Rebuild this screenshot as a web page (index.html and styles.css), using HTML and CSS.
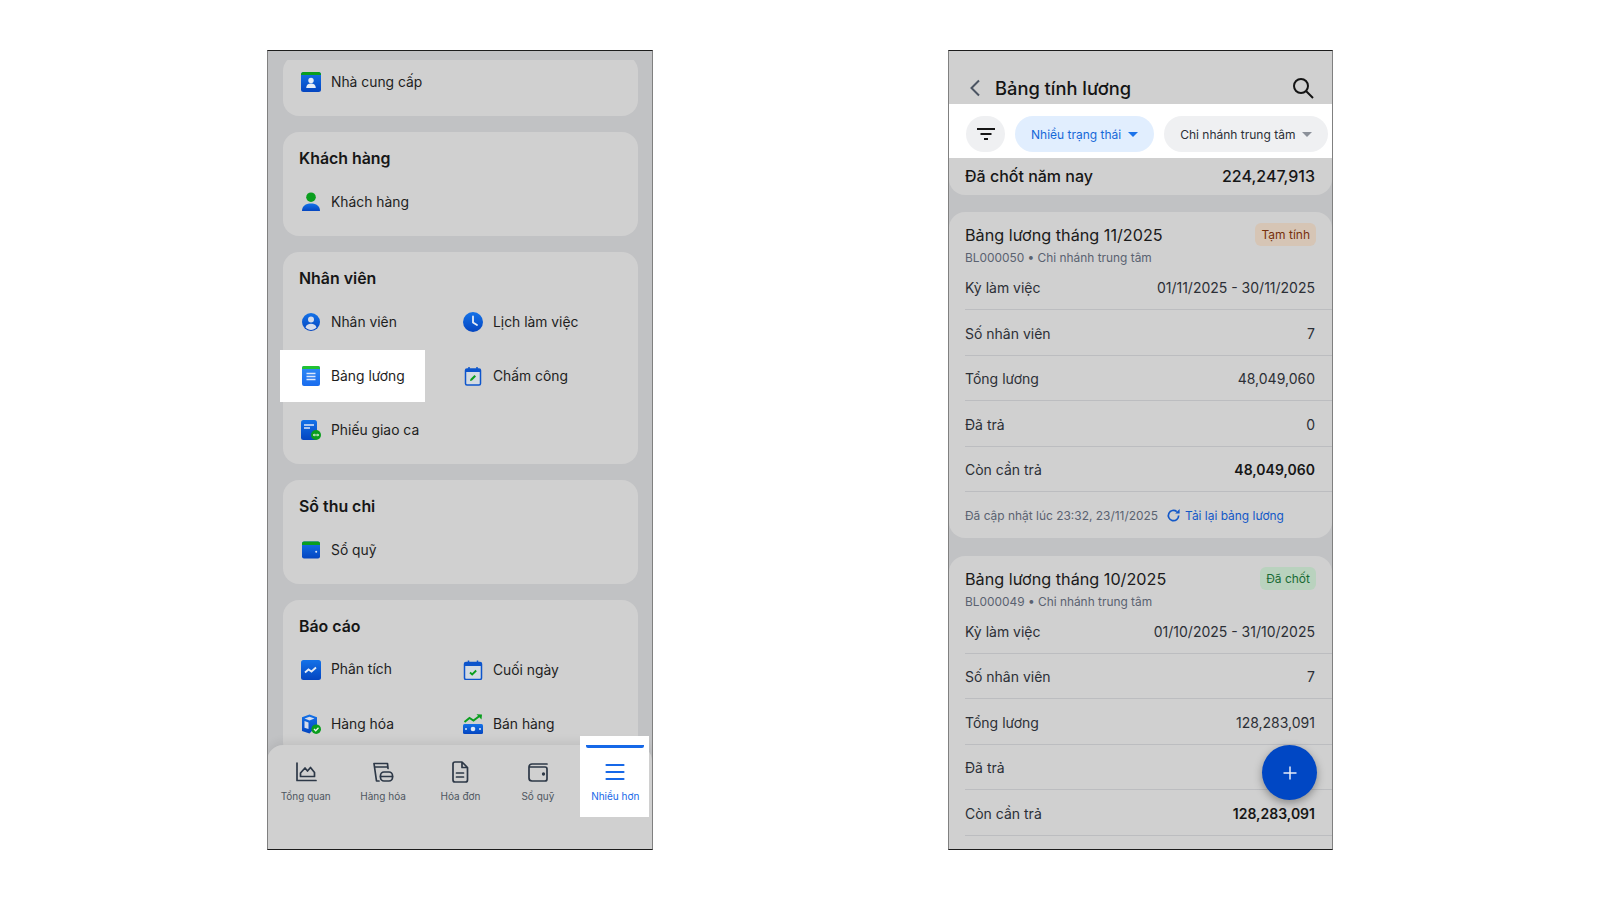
FILE: index.html
```html
<!DOCTYPE html>
<html lang="vi">
<head>
<meta charset="utf-8">
<title>Bảng tính lương</title>
<link rel="stylesheet" href="styles.css">
</head>
<body>
<div class="stage">
  <section class="phone">
    <div class="status-gap"></div>
    <div class="scroll">
      <div class="group first">
        <div class="grid">
          <div class="item">
            <svg class="ic" viewBox="0 0 20 20">
              <defs>
                <linearGradient id="blue" x1="0" y1="0" x2="0" y2="1"><stop offset="0" stop-color="#1472e8"/><stop offset="1" stop-color="#0445c0"/></linearGradient>
                <linearGradient id="lblue" x1="0" y1="0" x2="0" y2="1"><stop offset="0" stop-color="#2f8bf5"/><stop offset="1" stop-color="#1a6cee"/></linearGradient>
              </defs>
              <rect width="20" height="20" rx="2.5" fill="url(#blue)"/>
              <path d="M2.5 0h15A2.5 2.5 0 0 1 20 2.5V3H0v-.5A2.5 2.5 0 0 1 2.5 0z" fill="#0a9e1e"/>
              <circle cx="10" cy="8.5" r="2.7" fill="#e6edf7"/>
              <path d="M5.2 16c0-3 2-4.4 4.8-4.4s4.800 1.400 4.800 4.400z" fill="#e6edf7"/>
            </svg>
            <span>Nhà cung cấp</span>
          </div>
        </div>
      </div>
      <div class="group">
        <h2>Khách hàng</h2>
        <div class="grid">
          <div class="item">
            <svg class="ic" viewBox="0 0 20 20"><circle cx="10" cy="5.200" r="4.800" fill="#0a9e1e"/><path d="M1 19c0-5 3.500-7.500 9-7.500s9 2.500 9 7.500z" fill="url(#blue)"/></svg>
            <span>Khách hàng</span>
          </div>
        </div>
      </div>
      <div class="group">
        <h2>Nhân viên</h2>
        <div class="grid">
          <div class="item">
            <svg class="ic" viewBox="0 0 20 20"><circle cx="10" cy="10" r="9" fill="url(#blue)"/><circle cx="10" cy="7.600" r="3" fill="#d5dceb"/><path d="M4.500 15.500c.6-2.600 2.700-3.700 5.500-3.700s4.900 1.100 5.500 3.700C14 17.100 12 18 10 18s-4-.9-5.500-2.500z" fill="#d5dceb"/></svg>
            <span>Nhân viên</span>
          </div>
          <div class="item">
            <svg class="ic" viewBox="0 0 20 20"><circle cx="10" cy="10" r="10" fill="url(#blue)"/><path d="M10 4.500V10.500L14 13" fill="none" stroke="#e6edf7" stroke-width="1.800" stroke-linecap="round"/></svg>
            <span>Lịch làm việc</span>
          </div>
          <div class="item active">
            <svg class="ic" viewBox="0 0 20 20"><rect x="1" width="18" height="20" rx="2" fill="url(#lblue)"/><path d="M3 0h14a2 2 0 0 1 2 2v1H1V2a2 2 0 0 1 2-2z" fill="#22c232"/><path d="M5.500 7.500h9M5.500 10.500h9M5.500 13.500h9" stroke="#dbe8fb" stroke-width="1.300"/></svg>
            <span>Bảng lương</span>
          </div>
          <div class="item">
            <svg class="ic" viewBox="0 0 20 20"><rect x="2.500" y="3" width="15" height="16" rx="1.500" fill="#d4dbe2" stroke="#0d55cc" stroke-width="1.500"/><path d="M2.500 4.500a1.500 1.500 0 0 1 1.500-1.500h12a1.500 1.500 0 0 1 1.500 1.500V6h-15z" fill="#0d55cc"/><path d="M6 1v3M14 1v3" stroke="#0d55cc" stroke-width="1.500"/><path d="M7 15l.5-2 4-4 1.500 1.500-4 4z" fill="#0a9e1e"/></svg>
            <span>Chấm công</span>
          </div>
          <div class="item">
            <svg class="ic" viewBox="0 0 20 20"><rect width="16" height="20" rx="2.500" fill="url(#blue)"/><path d="M3 5h10M3 8h6" stroke="#dfe8f7" stroke-width="1.400"/><circle cx="15" cy="15" r="5" fill="#0a9e1e"/><path d="M12.500 15h5M13.500 13.800l-1 1.200 1 1.200M16.500 13.800l1 1.200-1 1.200" fill="none" stroke="#e9f5ea" stroke-width="1"/></svg>
            <span>Phiếu giao ca</span>
          </div>
        </div>
      </div>
      <div class="group">
        <h2>Sổ thu chi</h2>
        <div class="grid">
          <div class="item">
            <svg class="ic" viewBox="0 0 20 20"><rect x="1" y="1.500" width="18" height="17" rx="2" fill="url(#blue)"/><path d="M3 1.500h14a2 2 0 0 1 2 2V5H1V3.500a2 2 0 0 1 2-2z" fill="#0a9e1e"/><circle cx="15.200" cy="11.800" r="1" fill="#dfe8f7"/></svg>
            <span>Sổ quỹ</span>
          </div>
        </div>
      </div>
      <div class="group">
        <h2>Báo cáo</h2>
        <div class="grid">
          <div class="item up">
            <svg class="ic" viewBox="0 0 20 20"><rect width="20" height="20" rx="2.500" fill="url(#blue)"/><path d="M4 12.500l3.500-3 3 2 4.500-4" fill="none" stroke="#e6edf7" stroke-width="1.800"/></svg>
            <span>Phân tích</span>
          </div>
          <div class="item">
            <svg class="ic" viewBox="0 0 20 20"><rect x="1.500" y="2.500" width="17" height="17" rx="1.500" fill="#d4dbe2" stroke="#0d55cc" stroke-width="1.500"/><path d="M1.500 4a1.500 1.500 0 0 1 1.500-1.500h14A1.500 1.500 0 0 1 18.500 4v2h-17z" fill="#0d55cc"/><path d="M5.500 .500v3M14.500 .500v3" stroke="#0d55cc" stroke-width="1.500"/><path d="M7 12.500l2.200 2 4-4" fill="none" stroke="#0a9e1e" stroke-width="1.800"/></svg>
            <span>Cuối ngày</span>
          </div>
          <div class="item">
            <svg class="ic" viewBox="0 0 20 20"><path d="M8.500 .5l7.500 2.800v8.200l-7.500 8-7.500-2.500V3.300z" fill="url(#blue)"/><path d="M3.500 4.500L8.500 2.800l5 1.700-5 2z M3.500 7l4 1.500V15l-4-1.300z" fill="#d5dceb"/><circle cx="15.200" cy="15.200" r="4.800" fill="#0a9e1e"/><path d="M13 15l1.700 1.700 2.800-3" fill="none" stroke="#e9f5ea" stroke-width="1.300"/></svg>
            <span>Hàng hóa</span>
          </div>
          <div class="item">
            <svg class="ic" viewBox="0 0 20 20"><path d="M1.500 8l5-4 4 2.500 6-4.500" fill="none" stroke="#0a9e1e" stroke-width="2"/><path d="M13.500 .3L19 .5l-.5 5z" fill="#0a9e1e"/><rect y="10" width="20" height="10" rx="1.500" fill="url(#blue)"/><circle cx="10" cy="15" r="2.300" fill="#dfe8f7"/><circle cx="3" cy="15" r="1" fill="#dfe8f7"/><circle cx="17" cy="15" r="1" fill="#dfe8f7"/></svg>
            <span>Bán hàng</span>
          </div>
        </div>
      </div>
    </div>
    <nav class="tabbar">
      <div class="tab">
        <svg class="nav-ic" viewBox="0 0 24 24"><path d="M3 3v17.500h19M6.500 16.500v-3.500L11 8l2.500 3 3-3.500 4 5v4z"/></svg>
        <span>Tổng quan</span>
      </div>
      <div class="tab">
        <svg class="nav-ic" viewBox="0 0 24 24"><path d="M8 21H5.500L3 3.500h13.500l.5 5M3.500 7h13"/><rect x="9.500" y="12" width="12" height="9" rx="3.500"/><path d="M9.500 16.500h12"/></svg>
        <span>Hàng hóa</span>
      </div>
      <div class="tab">
        <svg class="nav-ic" viewBox="0 0 24 24"><path d="M5 4a2 2 0 0 1 2-2h7l5.500 5.500V20a2 2 0 0 1-2 2H7a2 2 0 0 1-2-2zM14 2v5.500h5.500M8.500 13h7M8.500 17h7"/></svg>
        <span>Hóa đơn</span>
      </div>
      <div class="tab">
        <svg class="nav-ic" viewBox="0 0 24 24"><path d="M3 7a3 3 0 0 1 3-3h15M3 7v11a3 3 0 0 0 3 3h13a2 2 0 0 0 2-2V9a2 2 0 0 0-2-2H3"/><circle cx="17.500" cy="14" r=".8"/></svg>
        <span>Sổ quỹ</span>
      </div>
      <div class="tab current">
        <svg class="nav-ic" viewBox="0 0 24 24"><path d="M3.500 5h17M3.500 12h17M3.500 19h17"/></svg>
        <span>Nhiều hơn</span>
      </div>
    </nav>
  </section>

  <section class="phone phone-b">
    <header class="topbar">
      <svg class="back" viewBox="0 0 14 20"><path d="M11 2.500L3.500 10l7.500 7.500"/></svg>
      <h1>Bảng tính lương</h1>
      <svg class="search" viewBox="0 0 24 24"><circle cx="10" cy="10" r="7"/><path d="M15 15l7 7"/></svg>
    </header>
    <div class="filters">
      <div class="filter-btn">
        <svg class="filter-ic" viewBox="0 0 20 14"><path d="M1 2h18M4.500 7h11M8 12h4"/></svg>
      </div>
      <div class="pill on"><span>Nhiều trạng thái</span><i class="caret"></i></div>
      <div class="pill"><span>Chi nhánh trung tâm</span><i class="caret"></i></div>
    </div>
    <div class="summary"><span>Đã chốt năm nay</span><span>224,247,913</span></div>

    <article class="card">
      <div class="card-head">
        <div><h3>Bảng lương tháng 11/2025</h3><p>BL000050 • Chi nhánh trung tâm</p></div>
        <span class="badge temp">Tạm tính</span>
      </div>
      <div class="row"><span>Kỳ làm việc</span><span>01/11/2025 - 30/11/2025</span></div>
      <div class="row"><span>Số nhân viên</span><span>7</span></div>
      <div class="row"><span>Tổng lương</span><span>48,049,060</span></div>
      <div class="row"><span>Đã trả</span><span>0</span></div>
      <div class="row"><span>Còn cần trả</span><b>48,049,060</b></div>
      <div class="foot">
        <span>Đã cập nhật lúc 23:32, 23/11/2025</span>
        <svg class="reload" viewBox="0 0 16 16"><path d="M13.500 8A5.500 5.500 0 1 1 11.500 3.800"/><path class="solid" d="M9.800 5.800h4.700V1z"/></svg>
        <a>Tải lại bảng lương</a>
      </div>
    </article>

    <article class="card">
      <div class="card-head">
        <div><h3>Bảng lương tháng 10/2025</h3><p>BL000049 • Chi nhánh trung tâm</p></div>
        <span class="badge done">Đã chốt</span>
      </div>
      <div class="row"><span>Kỳ làm việc</span><span>01/10/2025 - 31/10/2025</span></div>
      <div class="row"><span>Số nhân viên</span><span>7</span></div>
      <div class="row"><span>Tổng lương</span><span>128,283,091</span></div>
      <div class="row"><span>Đã trả</span><span>0</span></div>
      <div class="row"><span>Còn cần trả</span><b>128,283,091</b></div>
      <div class="foot"></div>
    </article>

    <div class="fab"><svg viewBox="0 0 16 16"><path d="M8 1.500v13M1.500 8h13"/></svg></div>
  </section>
</div>
</body>
</html>
```

FILE: styles.css
```css
* { box-sizing: border-box; }
html, body { margin: 0; height: 100%; background: #fff; }
body { font-family: Inter, "Noto Sans", sans-serif; color: #161616; overflow: hidden; }
h1, h2, h3, p { margin: 0; }

.stage { display: flex; gap: 295px; padding: 50px 0 0 267px; }

.phone {
  position: relative;
  display: flex;
  flex: none;
  flex-direction: column;
  width: 386px;
  height: 800px;
  overflow: hidden;
  background: #c1c2c4;
  border-style: solid;
  border-color: #1c1c1c #808080;
  border-width: 1px;
}
.phone-b { width: 385px; }

/* left phone */
.status-gap { height: 9px; flex: none; }
.scroll { flex: 1; overflow: hidden; padding: 0 14px 0 15px; display: flex; flex-direction: column; gap: 16px; }
.group { flex: none; background: #d0d0d0; border-radius: 16px; padding: 15px 16px 7px; }
.group.first { padding-top: 0; margin-top: -5px; }
.group h2 { font-size: 15.900px; line-height: 24px; font-weight: 600; color: #161616; margin-bottom: 4px; }
.grid { display: grid; grid-template-columns: 162px 162px; grid-auto-rows: 54px; }
.item { position: relative; display: flex; align-items: center; gap: 10px; padding-left: 2px; font-size: 13.850px; color: #1e1e1e; }
.item span { position: relative; }
.item.up span { top: -1px; }
.item.active::before {
  content: "";
  position: absolute;
  left: -19px;
  right: 36px;
  top: 1px;
  bottom: 1px;
  background: #fff;
}
.ic { position: relative; width: 20px; height: 20px; flex: none; }

.tabbar {
  position: absolute;
  left: -1px;
  right: 0;
  bottom: 0;
  height: 104px;
  display: grid;
  grid-template-columns: repeat(5, 77.400px);
  background: #d0d0d0;
  border-radius: 16px 16px 0 0;
  box-shadow: 0 -3px 10px rgba(0, 0, 0, .08);
}
.tab { position: relative; display: flex; flex-direction: column; align-items: center; padding-top: 15px; font-size: 10px; line-height: 14px; color: #4e5660; }
.tab span { position: relative; margin-top: 5px; }
.nav-ic { position: relative; width: 24px; height: 24px; fill: none; stroke: #2d3847; stroke-width: 1.700; stroke-linejoin: round; stroke-linecap: round; }
.tab.current { color: #1668e8; }
.tab.current .nav-ic { stroke: #1668e8; stroke-width: 2.200; }
.tab.current::before {
  content: "";
  position: absolute;
  left: 3px;
  right: 5px;
  top: -9px;
  height: 81px;
  background: #fff;
}
.tab.current::after {
  content: "";
  position: absolute;
  left: 9px;
  right: 10px;
  top: 0;
  height: 3px;
  border-radius: 0 0 2px 2px;
  background: #1668e8;
}

/* right phone */
.topbar { flex: none; height: 53px; padding: 21px 17px 0 19px; display: flex; align-items: center; background: #d0d0d0; }
.topbar h1 { flex: 1; font-size: 18.300px; font-weight: 500; color: #141414; margin-left: 13px; }
.back { flex: none; width: 14px; height: 20px; fill: none; stroke: #4c5563; stroke-width: 2; }
.search { flex: none; width: 24px; height: 24px; fill: none; stroke: #141414; stroke-width: 2; }

.filters { flex: none; height: 54px; background: #fff; display: flex; align-items: center; gap: 10px; padding: 6px 0 0 17px; white-space: nowrap; }
.filter-btn { flex: none; width: 39px; height: 36px; border-radius: 18px; background: #eff0f2; display: flex; align-items: center; justify-content: center; }
.filter-ic { width: 20px; height: 14px; fill: none; stroke: #161616; stroke-width: 2; }
.pill { flex: none; height: 36px; border-radius: 18px; background: #eff0f2; display: flex; align-items: center; gap: 7px; padding: 0 16px; font-size: 12px; color: #2b2f36; }
.pill.on { background: #e1eefe; color: #1668d8; }
.caret { width: 0; height: 0; border-left: 5px solid transparent; border-right: 5px solid transparent; border-top: 5px solid #8b9099; }
.pill.on .caret { border-top-color: #1b73ea; }

.summary { flex: none; height: 37px; padding: 0 17px 1px 16px; display: flex; align-items: center; justify-content: space-between; background: #d0d0d0; border-radius: 0 0 16px 16px; font-size: 16px; font-weight: 500; color: #161616; }

.card { flex: none; margin-top: 17px; background: #d0d0d0; border-radius: 16px 16px 0 0; padding-left: 16px; }
.card + .card { margin-top: 18px; }
.card:first-of-type { border-radius: 16px; }
.card-head { height: 52.500px; padding: 11px 16px 0 0; display: flex; justify-content: space-between; align-items: flex-start; }
.card-head h3 { font-size: 16.200px; line-height: 24px; font-weight: 400; color: #1a1a1a; }
.card-head p { font-size: 11.900px; line-height: 14px; margin-top: 4px; color: #5a6270; }
.badge { height: 23px; padding: 0 6px; border-radius: 6px; font-size: 12px; line-height: 23px; }
.badge.temp { background: #d6c5b5; color: #76300c; }
.badge.done { background: #b9d2be; color: #186a34; }
.row { height: 45.500px; padding: 1.500px 17px 0 0; display: flex; align-items: center; justify-content: space-between; font-size: 14px; color: #2c2f36; border-bottom: 1px solid #bcbdc0; }
.row b { font-weight: 600; color: #161616; }
.foot { height: 45.500px; padding-top: 1px; display: flex; align-items: center; font-size: 11.950px; color: #5a6270; }
.reload { width: 15px; height: 15px; margin: 0 4px 0 8px; fill: none; stroke: #1358c8; stroke-width: 1.800; }
.reload .solid { fill: #1358c8; stroke: none; }
.foot a { color: #1358c8; }

.fab { position: absolute; left: 313px; top: 694px; width: 55px; height: 55px; border-radius: 50%; background: #0047c4; box-shadow: 0 3px 8px rgba(0, 0, 0, .35); display: flex; align-items: center; justify-content: center; }
.fab svg { width: 16px; height: 16px; fill: none; stroke: #e6ecf8; stroke-width: 1.500; }
```
